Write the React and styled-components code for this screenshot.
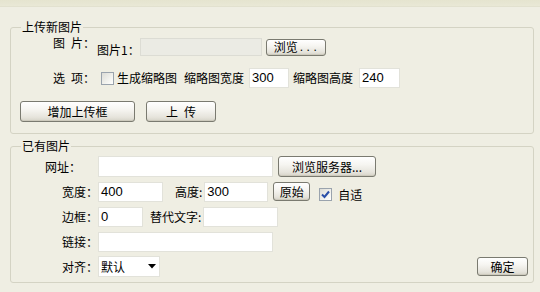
import React from "react";
import styled, { createGlobalStyle } from "styled-components";

const Global = createGlobalStyle`
  html, body { margin: 0; padding: 0; background: #efeee3; }
  body {
    width: 540px; height: 292px; overflow: hidden;
    font-family: "Noto Sans CJK SC", "Liberation Sans", sans-serif;
    font-size: 12px; color: #000;
  }
`;

const Page = styled.div`
  width: 540px;
  height: 292px;
  background: #efeee3;
  display: flex;
  flex-direction: column;
`;

const TopBand = styled.div`
  height: 6px;
  background: linear-gradient(#e5e4cf, #e9e8d6);
  border-bottom: 1px solid #e2e1cf;
`;

const Fieldset = styled.fieldset`
  margin: ${(p) => p.$mt}px 6px 0 10px;
  padding: ${(p) => p.$pt}px 5px ${(p) => p.$pb}px 10px;
  border: 1px solid #d4d3c4;
  border-radius: 3px;
  min-width: 0;
  display: flex;
  flex-direction: column;
`;

const Legend = styled.legend`
  padding: 0 1px;
  margin-left: 0;
  line-height: 14px;
  font-size: 12px;
  color: #000;
`;

const Row = styled.div`
  display: flex;
  align-items: center;
  height: ${(p) => p.$h}px;
  margin-top: ${(p) => p.$mt || 0}px;
`;

const Label = styled.div`
  width: ${(p) => p.$w}px;
  flex: none;
  text-align: right;
  padding-right: ${(p) => p.$pr || 0}px;
  box-sizing: border-box;
  white-space: pre;
  line-height: 14px;
  align-self: ${(p) => (p.$top ? "flex-start" : "center")};
  margin-top: ${(p) => (p.$top ? 0 : 0)}px;
`;

const Text = styled.span`
  white-space: pre;
  line-height: 14px;
  margin-left: ${(p) => p.$ml || 0}px;
  margin-top: ${(p) => p.$mtop || 0}px;
  flex: none;
`;

const Input = styled.div`
  flex: none;
  box-sizing: border-box;
  width: ${(p) => p.$w}px;
  height: ${(p) => p.$h || 20}px;
  margin-left: ${(p) => p.$ml || 0}px;
  background: ${(p) => (p.$disabled ? "#ebebe4" : "#ffffff")};
  border: 1px solid ${(p) => (p.$disabled ? "#dcdcd4" : "#e2e2da")};
  font-family: "Liberation Sans", Arial, sans-serif;
  font-size: 13px;
  line-height: 18px;
  padding-left: 2px;
  display: flex;
  align-items: center;
`;

const Button = styled.div`
  flex: none;
  box-sizing: border-box;
  width: ${(p) => p.$w}px;
  height: ${(p) => p.$h || 21}px;
  margin-left: ${(p) => p.$ml || 0}px;
  border: 1px solid #7a7a70;
  border-radius: 3px;
  background: linear-gradient(#ffffff 0%, #f6f5f1 40%, #e6e4dc 80%, #d6d3c8 100%);
  box-shadow: inset 0 -1px 0 #cdcabd;
  display: flex;
  align-items: center;
  justify-content: ${(p) => (p.$left ? "flex-start" : "center")};
  padding-left: ${(p) => (p.$left ? 7 : 0)}px;
  white-space: pre;
  line-height: 14px;
  color: #000;
`;

const Dots = styled.span`
  font-family: "Liberation Sans", Arial, sans-serif;
  font-size: 12px;
  letter-spacing: 3.6px;
  margin-left: 2px;
`;

const Check = styled.span`
  flex: none;
  box-sizing: border-box;
  width: 13px;
  height: 13px;
  margin-left: ${(p) => p.$ml || 0}px;
  margin-top: ${(p) => p.$mtop || 0}px;
  border: 1px solid #9aa3ad;
  background: linear-gradient(135deg, #dcdcd6 0%, #f2f2ee 60%, #ffffff 100%);
  display: flex;
  align-items: center;
  justify-content: center;
`;

const Select = styled.div`
  flex: none;
  box-sizing: border-box;
  width: ${(p) => p.$w}px;
  height: 21px;
  background: #fff;
  border: 1px solid #e2e2da;
  display: flex;
  align-items: center;
  justify-content: space-between;
  padding: 0 3px 0 2px;
  line-height: 14px;
`;

const Spacer = styled.div`
  flex: 1;
`;

const SP = "\u2002";

export default function App() {
  return (
    <Page>
      <Global />
      <TopBand />
      <Fieldset $mt={13} $pt={0} $pb={11}>
        <Legend>上传新图片</Legend>
        <Row $h={22} $mt={2}>
          <Label $w={76} $pr={2} $top>{`图${SP}片：`}</Label>
          <Text $mtop={6}>图片1：</Text>
          <Input $w={122} $h={18} $disabled $ml={0} />
          <Button $w={60} $h={17} $ml={4} $left>
            浏览<Dots>...</Dots>
          </Button>
        </Row>
        <Row $h={20} $mt={10}>
          <Label $w={76} $pr={2}>{`选${SP}项：`}</Label>
          <Check $ml={4} />
          <Text $ml={3}>生成缩略图</Text>
          <Text $ml={7}>缩略图宽度</Text>
          <Input $w={40} $ml={5}>300</Input>
          <Text $ml={4}>缩略图高度</Text>
          <Input $w={41} $ml={6}>240</Input>
        </Row>
        <Row $h={21} $mt={13}>
          <Button $w={115} $ml={-1}>增加上传框</Button>
          <Button $w={70} $ml={11}>{`上${SP}传`}</Button>
        </Row>
      </Fieldset>
      <Fieldset $mt={5} $pt={1} $pb={3}>
        <Legend>已有图片</Legend>
        <Row $h={25}>
          <Label $w={77} $pr={17}>网址：</Label>
          <Input $w={175} $h={21} />
          <Button $w={98} $ml={5}>浏览服务器...</Button>
        </Row>
        <Row $h={25}>
          <Label $w={77}>宽度：</Label>
          <Input $w={65}>400</Input>
          <Text $ml={12}>高度:</Text>
          <Input $w={64} $ml={2}>300</Input>
          <Button $w={37} $h={19} $ml={5}>原始</Button>
          <Check $ml={9} $mtop={6}>
            <svg width="9" height="9" viewBox="0 0 9 9">
              <path d="M1 4.5 L3.5 7 L8 1.5" fill="none" stroke="#2a4fa8" strokeWidth="2" />
            </svg>
          </Check>
          <Text $ml={6} $mtop={6}>自适</Text>
        </Row>
        <Row $h={25}>
          <Label $w={77}>边框：</Label>
          <Input $w={45}>0</Input>
          <Text $ml={7}>替代文字:</Text>
          <Input $w={75} $ml={2} />
        </Row>
        <Row $h={25}>
          <Label $w={77}>链接：</Label>
          <Input $w={175} />
        </Row>
        <Row $h={25}>
          <Label $w={77}>对齐：</Label>
          <Select $w={62}>
            <span>默认</span>
            <svg width="8" height="5" viewBox="0 0 8 5">
              <path d="M0 0 H8 L4 4.5 Z" fill="#000" />
            </svg>
          </Select>
          <Spacer />
          <Button $w={51} $h={19}>确定</Button>
        </Row>
      </Fieldset>
    </Page>
  );
}
